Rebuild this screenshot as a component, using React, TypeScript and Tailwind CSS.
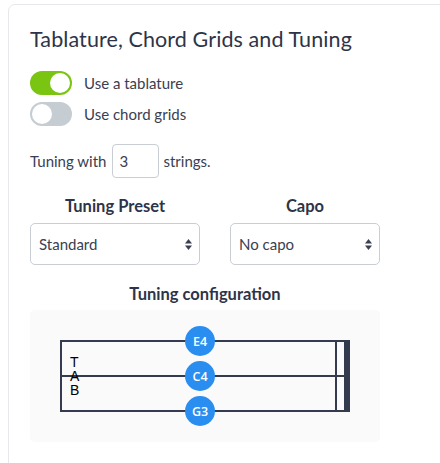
import React from "react";

function Toggle({ on }: { on: boolean }) {
  return (
    <div
      className={`relative w-[42px] h-[24px] rounded-full ${on ? "bg-[#79c511]" : "bg-[#c5cdd3]"}`}
    >
      <div
        className={`absolute top-[2px] w-[20px] h-[20px] rounded-full bg-white ${on ? "left-[20px]" : "left-[2px]"}`}
      />
    </div>
  );
}

function Arrows() {
  return (
    <svg width="7" height="11" viewBox="0 0 7 11">
      <polygon points="3.5,0 7,4.5 0,4.5" fill="#3a4052" />
      <polygon points="0,6.5 7,6.5 3.5,11" fill="#3a4052" />
    </svg>
  );
}

function Select({ w, label }: { w: string; label: string }) {
  return (
    <div
      className={`${w} h-[42px] border border-[#c9ced4] rounded-[5px] flex items-center justify-between pl-[8px] pr-[7px] text-[15px] text-[#3a4052]`}
    >
      <span>{label}</span>
      <Arrows />
    </div>
  );
}

export default function App() {
  const font = { fontFamily: "Lato, 'Open Sans', sans-serif" };
  return (
    <div className="w-[440px] h-[463px] overflow-hidden bg-white" style={font}>
      <div className="ml-[8px] mt-[4px] w-[460px] h-[480px] border border-[#e6e8eb] rounded-[7px] pl-[21px] pt-[19px]">
        <h1 className="text-[21.5px] leading-[30px] text-[#2e3447] tracking-[0.1px]">
          Tablature, Chord Grids and Tuning
        </h1>
        <div className="mt-[17px] flex flex-col gap-[7px]">
          <div className="flex items-center gap-[12px]">
            <Toggle on={true} />
            <span className="text-[15px] text-[#3a4052]">Use a tablature</span>
          </div>
          <div className="flex items-center gap-[12px]">
            <Toggle on={false} />
            <span className="text-[15px] text-[#3a4052]">Use chord grids</span>
          </div>
        </div>
        <div className="mt-[18px] flex items-center text-[15px] text-[#3a4052]">
          <span>Tuning with</span>
          <div className="ml-[6px] w-[47px] h-[34px] border border-[#c9ced4] rounded-[4px] flex items-center pl-[6px]">
            3
          </div>
          <span className="ml-[4px]">strings.</span>
        </div>
        <div className="mt-[18px] flex gap-[30px]">
          <div className="w-[170px] flex flex-col items-center">
            <div className="text-[16.5px] font-bold text-[#2e3447] leading-[20px]">Tuning Preset</div>
            <div className="mt-[7px]">
              <Select w="w-[170px]" label="Standard" />
            </div>
          </div>
          <div className="w-[150px] flex flex-col items-center">
            <div className="text-[16.5px] font-bold text-[#2e3447] leading-[20px]">Capo</div>
            <div className="mt-[7px]">
              <Select w="w-[150px]" label="No capo" />
            </div>
          </div>
        </div>
        <div className="w-[350px] mt-[19px] text-center text-[16.5px] font-bold text-[#2e3447] leading-[20px]">
          Tuning configuration
        </div>
        <div className="w-[350px] h-[132px] mt-[6px] bg-[#fafafa] rounded-[5px] relative">
          <svg width="350" height="132" viewBox="0 0 350 132" className="absolute left-0 top-0">
            <g stroke="#353b4f" strokeWidth="2" fill="none">
              <line x1="30" y1="31" x2="320" y2="31" />
              <line x1="30" y1="66" x2="320" y2="66" />
              <line x1="30" y1="101" x2="320" y2="101" />
              <line x1="31" y1="30" x2="31" y2="102" />
              <line x1="306" y1="30" x2="306" y2="102" />
            </g>
            <rect x="314" y="30" width="6" height="72" fill="#353b4f" />
            <g fontFamily="'Liberation Sans', sans-serif" fontSize="14" fill="#000">
              <text x="40" y="57">T</text>
              <text x="40" y="71">A</text>
              <text x="40" y="85">B</text>
            </g>
            {[
              { y: 31, t: "E4" },
              { y: 66, t: "C4" },
              { y: 101, t: "G3" },
            ].map((c) => (
              <g key={c.t}>
                <circle cx="170" cy={c.y} r="15" fill="#2a8ef0" />
                <text
                  x="170"
                  y={c.y + 4.5}
                  textAnchor="middle"
                  fontFamily="'Open Sans', sans-serif"
                  fontWeight="600"
                  fontSize="12.5"
                  fill="#fff"
                >
                  {c.t}
                </text>
              </g>
            ))}
          </svg>
        </div>
      </div>
    </div>
  );
}
